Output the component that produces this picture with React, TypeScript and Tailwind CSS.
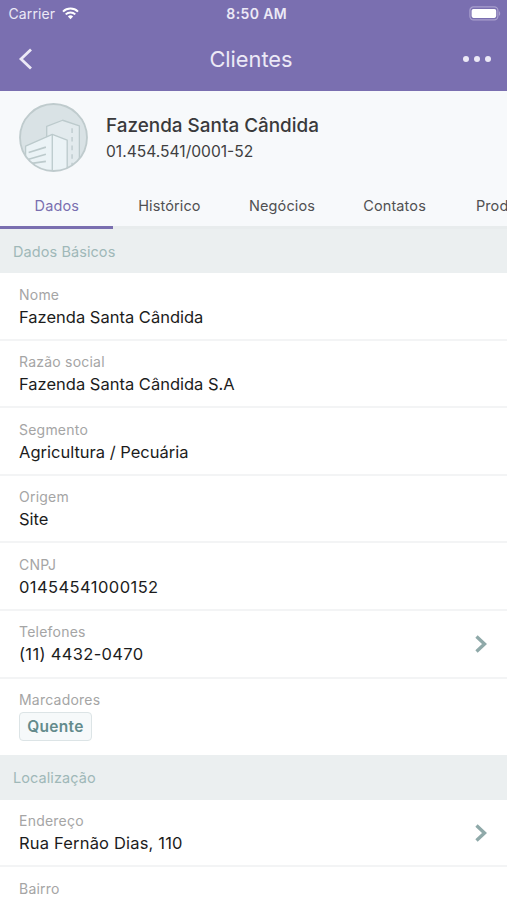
import { clsx } from 'clsx';

type Field = {
    label: string;
    value?: string;
    tag?: string;
    link?: boolean;
    valueClass?: string;
};

const TABS = ['Dados', 'Histórico', 'Negócios', 'Contatos', 'Produtos'];

const BASIC_FIELDS: Field[] = [
    { label: 'Nome', value: 'Fazenda Santa Cândida' },
    { label: 'Razão social', value: 'Fazenda Santa Cândida S.A' },
    { label: 'Segmento', value: 'Agricultura / Pecuária' },
    { label: 'Origem', value: 'Site' },
    { label: 'CNPJ', value: '01454541000152', valueClass: 'tracking-[0.43px]' },
    { label: 'Telefones', value: '(11) 4432-0470', valueClass: 'tracking-[0.33px]', link: true },
    { label: 'Marcadores', tag: 'Quente' },
];

const LOCATION_FIELDS: Field[] = [
    { label: 'Endereço', value: 'Rua Fernão Dias, 110', valueClass: 'tracking-[0.18px]', link: true },
    { label: 'Bairro' },
];

function WifiIcon() {
    return (
        <svg width="17" height="13" viewBox="0 0 17 13" fill="none" stroke="#fff" strokeWidth="2">
            <path d="M1 4.6C5.2 .6 11.8 .6 16 4.6" />
            <path d="M3.7 7.4C6.4 4.8 10.6 4.8 13.3 7.4" />
            <path d="M5.9 9.4C7.4 8 9.6 8 11.1 9.4L8.5 12.2Z" fill="#fff" stroke="none" />
        </svg>
    );
}

function BatteryIcon() {
    return (
        <svg width="32" height="15" viewBox="0 0 32 15">
            <rect x=".9" y=".9" width="28" height="13" rx="3.6" fill="none" stroke="#a9a0ce" strokeWidth="1.2" />
            <rect x="2.6" y="2.9" width="24.6" height="9" rx="1.8" fill="#fff" />
            <path d="M30 5.2C31.6 5.8 31.6 9.2 30 9.8Z" fill="#a9a0ce" />
        </svg>
    );
}

function CompanyAvatar() {
    return (
        <svg width="69" height="69" viewBox="0 0 68 68" className="shrink-0">
            <clipPath id="avatar">
                <circle cx="34" cy="34" r="33" />
            </clipPath>
            <circle cx="34" cy="34" r="33.2" fill="#d9e2e5" />
            <g clipPath="url(#avatar)" stroke="#bccacc" strokeWidth="1.3" strokeLinejoin="round">
                <path d="M27.3 70V23L43 17L59.5 22.5V70Z" fill="#e2eaed" />
                <path d="M52.3 25V62" fill="none" strokeDasharray="4.5 4" />
                <path d="M6.5 70V42.5L32.8 31L47.5 36.5V70Z" fill="#ebf3f6" />
                <path d="M32.8 31V70" fill="none" />
                <path d="M9.5 48.8L26.5 43.5M9.5 55.5L26.5 50.5M12.5 59.5L26.5 57.5" fill="none" strokeWidth="1.6" />
            </g>
            <circle cx="34" cy="34" r="33" fill="none" stroke="#bfcbcd" strokeWidth="1.8" />
        </svg>
    );
}

function SectionTitle({ children, className }: { children: string; className?: string }) {
    return (
        <h2 className={clsx('flex items-center bg-[#ebeff0] pl-[13px] text-[14.5px] font-normal tracking-[0.08px] text-[#9fb8b8]', className)}>
            {children}
        </h2>
    );
}

function FieldRow({ field }: { field: Field }) {
    return (
        <div className={clsx(
            'flex items-start justify-between pr-[19px] pl-[19px] pt-[11.5px]',
            field.tag ? 'h-[76px]' : 'h-[67.6px] border-b-2 border-[#f3f4f5]',
        )}>
            <div>
                <div className="text-[14px] leading-5 tracking-[0.22px] text-[#a5a5a5]">{field.label}</div>
                {field.value && (
                    <div className={clsx('text-[16.5px] leading-6 text-[#1c1c1c]', field.valueClass)}>{field.value}</div>
                )}
                {field.tag && (
                    <span className="mt-0.5 flex h-[29px] w-[73px] items-center justify-center rounded border border-[#dce4e6] bg-[#f6f9fa] text-[15.5px] font-semibold tracking-[0.3px] text-[#648b8c]">
                        {field.tag}
                    </span>
                )}
            </div>
            {field.link && (
                <svg width="14" height="18" viewBox="0 0 14 18" fill="none" stroke="#8fa9a9" strokeWidth="3.4" className="mt-[12.5px]">
                    <path d="M2.5 1.5L10.5 9L2.5 16.5" />
                </svg>
            )}
        </div>
    );
}

export default function App() {
    return (
        <div className="h-[900px] w-[507px] overflow-hidden bg-white font-['Inter',sans-serif]">
            {/* Header */}
            <header className="h-[91px] bg-[#7a6fb0] text-[#ece9f6]">
                <div className="grid h-[27px] grid-cols-3 items-center pr-[6px] pl-[8.5px] text-[14px]">
                    <div className="flex items-center gap-[7px]">
                        <span className="tracking-[0.1px]">Carrier</span>
                        <WifiIcon />
                    </div>
                    <span className="pl-1 text-center font-semibold tracking-[0.4px]">8:50 AM</span>
                    <div className="flex justify-end">
                        <BatteryIcon />
                    </div>
                </div>
                <div className="grid h-16 grid-cols-3 items-center pr-4 pl-[18px]">
                    <button aria-label="Voltar">
                        <svg width="15" height="22" viewBox="0 0 15 22" fill="none" stroke="currentColor" strokeWidth="2.8">
                            <path d="M13 1.5L3 11L13 20.5" />
                        </svg>
                    </button>
                    <h1 className="pr-[7px] text-center text-[21.8px] font-normal">Clientes</h1>
                    <button aria-label="Mais opções" className="flex justify-end gap-[4.5px]">
                        <span className="size-[6.5px] rounded-full bg-current" />
                        <span className="size-[6.5px] rounded-full bg-current" />
                        <span className="size-[6.5px] rounded-full bg-current" />
                    </button>
                </div>
            </header>

            {/* Client summary */}
            <div className="flex h-[92px] items-center gap-[18px] bg-[#f7f9fb] pl-[19px] pt-px">
                <CompanyAvatar />
                <div>
                    <div className="text-[18.9px] leading-7 font-medium text-[#3a3a3c]">Fazenda Santa Cândida</div>
                    <div className="text-[15.6px] leading-6 text-[#3f3f41]">01.454.541/0001-52</div>
                </div>
            </div>

            {/* Tabs */}
            <nav className="flex h-[46px] overflow-hidden bg-[#f7f9fb] text-[14.5px]">
                {TABS.map((tab, i) => (
                    <button
                        key={tab}
                        className={clsx(
                            'w-[112.6px] shrink-0 border-b-3 pt-[2px] pl-px tracking-[0.12px]',
                            i === 0 ? 'border-[#7a6fb0] text-[#7a6fb0]' : 'border-[#e8eced] text-[#505052]',
                        )}
                    >
                        {tab}
                    </button>
                ))}
            </nav>

            <SectionTitle className="h-11 pt-px">Dados Básicos</SectionTitle>
            {BASIC_FIELDS.map(field => <FieldRow key={field.label} field={field} />)}

            <SectionTitle className="h-[45px] pt-[2px]">Localização</SectionTitle>
            {LOCATION_FIELDS.map(field => <FieldRow key={field.label} field={field} />)}
        </div>
    );
}
